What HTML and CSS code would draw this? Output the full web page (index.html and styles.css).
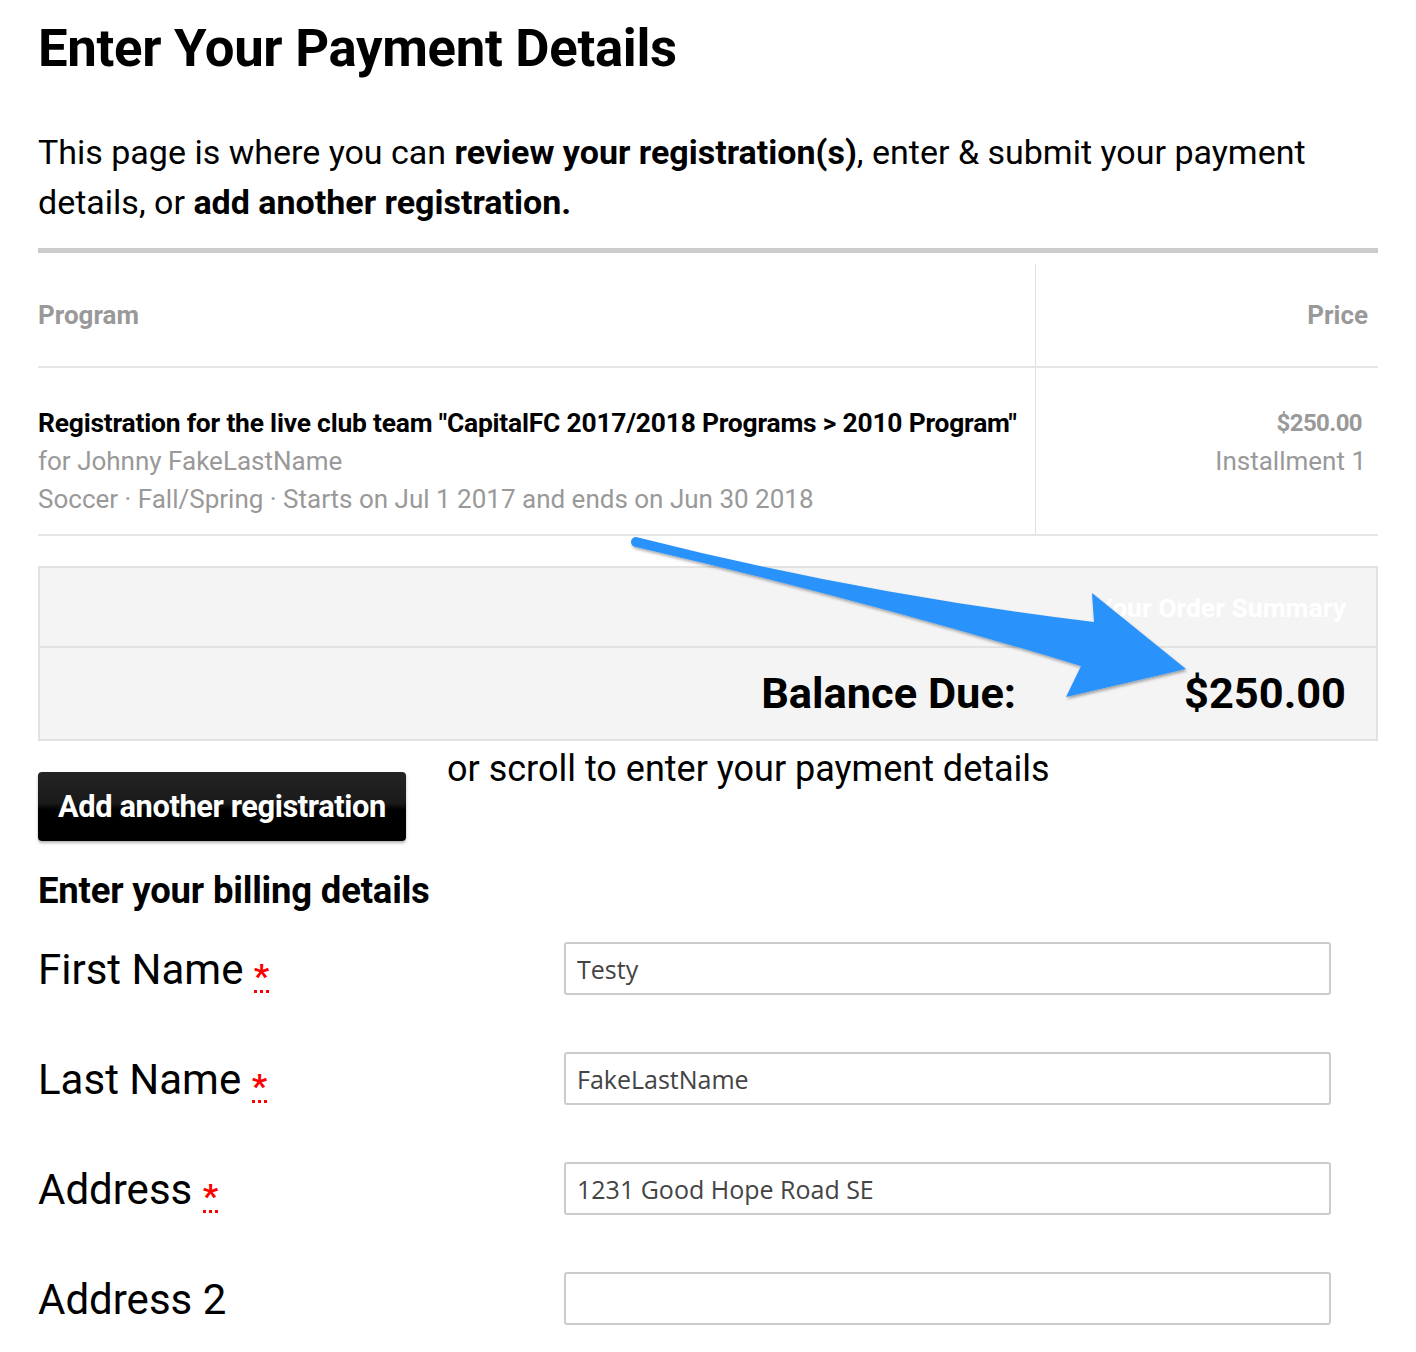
FILE: index.html
```html
<!DOCTYPE html>
<html lang="en">
<head>
<meta charset="utf-8">
<title>Enter Your Payment Details</title>
<link rel="stylesheet" href="styles.css">
</head>
<body>
<main class="page">
  <h1 class="title">Enter Your Payment Details</h1>
  <p class="intro">This page is where you can <strong>review your registration(s)</strong>, enter &amp; submit your payment details, or <strong>add another registration.</strong></p>

  <div class="cart">
    <div class="cart-head">
      <div class="col-program th">Program</div>
      <div class="col-price th">Price</div>
    </div>
    <div class="cart-row">
      <div class="col-program">
        <div class="item-title">Registration for the live club team "CapitalFC 2017/2018 Programs &gt; 2010 Program"</div>
        <div class="item-sub">for Johnny FakeLastName</div>
        <div class="item-sub">Soccer · Fall/Spring · Starts on Jul 1 2017 and ends on Jun 30 2018</div>
      </div>
      <div class="col-price">
        <div class="price-amt">$250.00</div>
        <div class="item-sub">Installment 1</div>
      </div>
    </div>
  </div>

  <div class="summary-wrap">
    <div class="summary">
      <div class="summary-head">Your Order Summary</div>
      <div class="summary-total">
        <span class="bal-label">Balance Due:</span>
        <span class="bal-amt">$250.00</span>
      </div>
    </div>
    <svg class="arrow" width="1416" height="200" viewBox="0 520 1416 200" aria-hidden="true">
      <defs>
        <filter id="sh" x="-10%" y="-30%" width="120%" height="160%">
          <feDropShadow dx="1" dy="2" stdDeviation="1.5" flood-color="#000" flood-opacity="0.35"/>
        </filter>
      </defs>
      <path filter="url(#sh)" fill="#2a93fb" d="M636 538 Q860 595 1094 623 L1092 594 L1186 670 L1066 698 L1081 667 Q860 600 636 548 A5 5 0 0 1 636 538 Z"/>
    </svg>
  </div>

  <div class="actions">
    <button class="btn-add" type="button">Add another registration</button>
    <span class="scroll-note">or scroll to enter your payment details</span>
  </div>

  <h2 class="billing-title">Enter your billing details</h2>

  <form class="billing">
    <div class="field">
      <label class="field-label">First Name <abbr class="req" title="required">*</abbr></label>
      <input class="field-input" type="text" value="Testy">
    </div>
    <div class="field">
      <label class="field-label">Last Name <abbr class="req" title="required">*</abbr></label>
      <input class="field-input" type="text" value="FakeLastName">
    </div>
    <div class="field">
      <label class="field-label">Address <abbr class="req" title="required">*</abbr></label>
      <input class="field-input" type="text" value="1231 Good Hope Road SE">
    </div>
    <div class="field">
      <label class="field-label">Address 2</label>
      <input class="field-input" type="text" value="">
    </div>
  </form>
</main>
</body>
</html>
```

FILE: styles.css
```css
* { box-sizing: border-box; }
html, body { margin: 0; padding: 0; background: #fff; }
body {
  font-family: Roboto, "Liberation Sans", Arial, sans-serif;
  color: #000;
}
.page {
  width: 1416px;
  padding: 0 38px;
}
.title {
  margin: 0;
  padding-top: 18px;
  font-size: 52.7px;
  font-weight: 700;
  line-height: 60px;
  letter-spacing: -0.3px;
}
.intro {
  margin: 49px 0 0;
  font-size: 34px;
  line-height: 50px;
  font-weight: 400;
}
.intro strong { font-weight: 700; }

.cart {
  margin-top: 21px;
  border-top: 5px solid #cccccc;
  padding-top: 11px;
}
.cart-head, .cart-row {
  display: grid;
  grid-template-columns: 997px 1fr;
}
.cart-head { height: 104px; border-bottom: 2px solid #e6e6e6; }
.cart-row { height: 168px; border-bottom: 2px solid #e6e6e6; }
.col-price {
  border-left: 1px solid #e0e0e0;
  text-align: right;
}
.th {
  display: flex;
  align-items: center;
  color: #999;
  font-weight: 700;
  font-size: 26px;
}
.col-price.th { justify-content: flex-end; padding-right: 10px; }
.cart-row .col-program { padding-top: 36px; }
.cart-row .col-price { padding-top: 36px; padding-right: 12px; }
.item-title {
  font-size: 26.4px;
  font-weight: 700;
  line-height: 38px;
  letter-spacing: -0.2px;
  white-space: nowrap;
}
.item-sub {
  font-size: 26px;
  line-height: 38px;
  color: #999;
}
.price-amt {
  font-size: 24px;
  font-weight: 700;
  line-height: 38px;
  color: #999;
  padding-right: 4px;
  letter-spacing: -0.6px;
}

.summary-wrap { position: relative; margin-top: 30px; }
.summary {
  background: #f4f4f4;
  border: 2px solid #e2e2e2;
}
.summary-head {
  height: 80px;
  display: flex;
  align-items: center;
  justify-content: flex-end;
  padding-right: 30px;
  color: #fff;
  font-size: 26.5px;
  font-weight: 700;
  border-bottom: 2px solid #e2e2e2;
}
.summary-total {
  height: 91px;
  display: flex;
  align-items: center;
  justify-content: flex-end;
  padding-right: 30px;
  font-size: 43.4px;
  font-weight: 700;
}
.bal-amt { margin-left: 168px; }
.arrow {
  position: absolute;
  left: -38px;
  top: -47px;
  overflow: visible;
  pointer-events: none;
}

.actions {
  display: flex;
  align-items: flex-start;
  gap: 41px;
}
.btn-add {
  margin-top: 31px;
  width: 368px;
  height: 69px;
  border: 0;
  border-radius: 4px;
  background: linear-gradient(#242424 0%, #1a1a1a 45%, #000 55%, #000 100%);
  color: #fff;
  font-family: Roboto, "Liberation Sans", Arial, sans-serif;
  font-size: 30.8px;
  font-weight: 700;
  letter-spacing: -0.4px;
  box-shadow: 0 2px 3px rgba(0,0,0,0.3);
  padding: 0;
}
.scroll-note {
  margin-top: 5px;
  font-size: 36px;
  line-height: 46px;
}
.billing-title {
  margin: 25px 0 0;
  font-size: 36.5px;
  line-height: 50px;
  font-weight: 700;
  letter-spacing: -0.2px;
}

.billing { margin-top: 26px; }
.field {
  display: flex;
  height: 110px;
  align-items: flex-start;
}
.field-label {
  width: 526px;
  font-size: 42px;
  line-height: 56px;
}
.req {
  display: inline-block;
  color: #f00;
  font-size: 34px;
  font-weight: 700;
  text-decoration: none;
  border-bottom: 3px dotted #f00;
  vertical-align: -4px;
  line-height: 26px;
  height: 30px;
}
.field-input {
  width: 767px;
  height: 53px;
  border: 2px solid #cccccc;
  border-radius: 3px;
  padding: 0 11px;
  font-family: "Open Sans", "Noto Sans", sans-serif;
  font-size: 25px;
  color: #444;
  background: #fff;
  outline: none;
}
```
